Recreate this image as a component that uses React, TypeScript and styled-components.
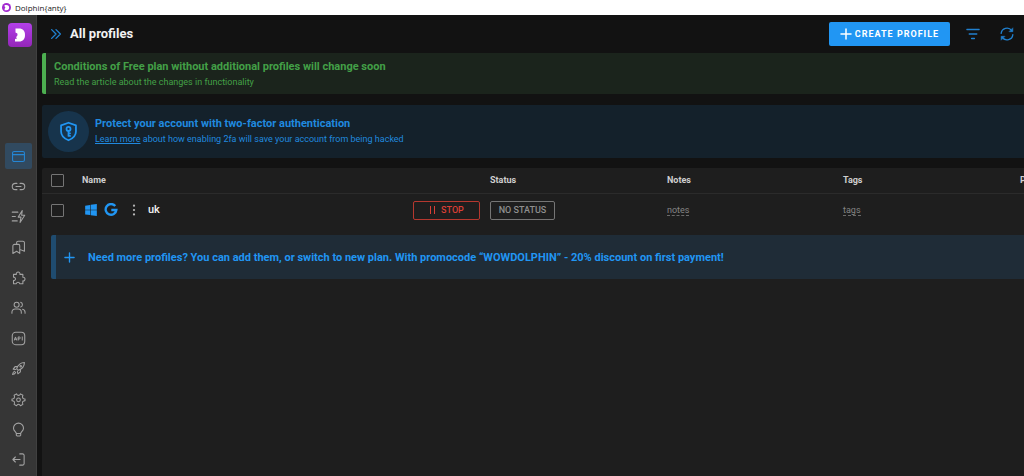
import React from 'react';
import styled, { createGlobalStyle } from 'styled-components';

const GlobalStyle = createGlobalStyle`
  *, *::before, *::after { box-sizing: border-box; }
  body {
    margin: 0;
    background: #121212;
    color: #e6e6e6;
    font-family: Roboto, "Liberation Sans", sans-serif;
    font-size: 9px;
    line-height: 14px;
    overflow-x: hidden;
  }
  button, input { font: inherit; margin: 0; }
`;

const blue = '#2196f3';

const Window = styled.div`
  display: flex;
  flex-direction: column;
  min-height: 100vh;
`;

const TitleBar = styled.header`
  display: flex;
  align-items: center;
  gap: 4px;
  height: 15px;
  padding-left: 2px;
  background: #fff;
  color: #222;
  font-family: "Open Sans", "Noto Sans", sans-serif;
  font-size: 8px;
`;

const Body = styled.div`
  display: flex;
  flex: 1;
`;

const Sidebar = styled.aside`
  display: flex;
  flex-direction: column;
  flex: 0 0 37px;
  padding: 8px 4px 3px 5px;
  background: #363636;
  border-right: 1px solid #404040;
`;

const Logo = styled.a`
  display: flex;
  align-items: center;
  justify-content: center;
  width: 24px;
  height: 24px;
  margin: 0 0 96px 3px;
  border-radius: 4px;
  background: linear-gradient(#b340ea, #9326b8);
`;

const Nav = styled.nav`
  display: flex;
  flex: 1;
  flex-direction: column;
  justify-content: space-between;
`;

const NavButton = styled.button<{ $active?: boolean }>`
  display: flex;
  align-items: center;
  justify-content: center;
  width: 27px;
  height: 26px;
  padding: 0;
  border: 0;
  border-radius: 2px;
  background: ${p => (p.$active ? '#314a60' : 'transparent')};
  color: ${p => (p.$active ? '#2586d4' : '#a3a3a3')};
`;

const Main = styled.main`
  display: flex;
  flex: 1;
  flex-direction: column;
  min-width: 0;
  padding-left: 5px;
`;

const Toolbar = styled.div`
  display: flex;
  align-items: center;
  height: 38px;
  padding: 0 10px 0 7px;
`;

const Title = styled.h1`
  flex: 1;
  margin: 0 0 0 7px;
  color: #f2f2f2;
  font-size: 13px;
  font-weight: 700;
  line-height: 18px;
`;

const IconButton = styled.button`
  display: flex;
  align-items: center;
  justify-content: center;
  width: 14px;
  height: 24px;
  padding: 0;
  border: 0;
  background: none;
  color: #2080cf;
`;

const ToolbarActions = styled.div`
  display: flex;
  align-items: center;
  gap: 20px;
  margin-left: 16px;
`;

const CreateButton = styled.button`
  display: flex;
  align-items: center;
  justify-content: center;
  gap: 3px;
  width: 121px;
  height: 24px;
  padding: 0;
  border: 0;
  border-radius: 2px;
  background: ${blue};
  color: #fff;
  font-size: 9px;
  font-weight: 700;
  letter-spacing: 1px;
`;

const Notice = styled.section`
  height: 41px;
  padding: 6px 8px;
  border-left: 4px solid #4caf50;
  border-radius: 2px 0 0 2px;
  background: #1b241c;
  color: #43a047;
`;

const BannerTitle = styled.h2`
  margin: 0;
  font-size: 11px;
  font-weight: 700;
  line-height: 15px;
`;

const BannerText = styled.p`
  margin: 0;
  font-size: 9px;
  line-height: 16px;
`;

const Security = styled.section`
  display: flex;
  align-items: center;
  gap: 6px;
  height: 53px;
  margin: 11px 0 10px;
  padding: 0 6px;
  border-radius: 2px 0 0 2px;
  background: #14212b;
  color: #2089df;
`;

const ShieldBadge = styled.div`
  display: flex;
  align-items: center;
  justify-content: center;
  width: 41px;
  height: 41px;
  border-radius: 50%;
  background: #17344c;
  color: ${blue};
`;

const Link = styled.a`
  color: inherit;
`;

const Panel = styled.section`
  flex: 1;
  border-radius: 2px 0 0 0;
  background: #1e1e1e;
`;

const Table = styled.table`
  width: 100%;
  border-collapse: collapse;
  table-layout: fixed;
`;

const Col = styled.col<{ $width?: number }>`
  width: ${p => (p.$width ? `${p.$width}px` : 'auto')};
`;

const HeadCell = styled.th`
  height: 25px;
  padding: 0;
  border-bottom: 1px solid #2b2b2b;
  color: #cfcfcf;
  font-size: 9px;
  font-weight: 700;
  text-align: left;
  white-space: nowrap;
`;

const Cell = styled.td`
  height: 34px;
  padding: 0;
`;

const Checkbox = styled.input`
  display: block;
  appearance: none;
  width: 13px;
  height: 13px;
  margin-left: 9px;
  border: 1px solid #757575;
  border-radius: 1px;
`;

const NameContent = styled.div`
  display: flex;
  align-items: center;
  padding: 0 10px 0 2px;
`;

const BrandIcons = styled.span`
  display: flex;
  gap: 6px;
  color: ${blue};
`;

const MenuButton = styled(IconButton)`
  margin: 0 7px 0 9px;
  color: #b8b8b8;
`;

const ProfileName = styled.span`
  flex: 1;
  color: #f0f0f0;
  font-size: 11px;
  font-weight: 500;
`;

const OutlineButton = styled.button<{ $tone: string; $line: string; $width: number }>`
  display: flex;
  align-items: center;
  justify-content: center;
  gap: 5px;
  width: ${p => p.$width}px;
  height: 19px;
  padding: 0;
  border: 1px solid ${p => p.$line};
  border-radius: 2px;
  background: none;
  color: ${p => p.$tone};
  font-size: 9px;
  font-weight: 500;
`;

const InlineEdit = styled.button`
  display: block;
  padding: 0;
  border: 0;
  border-bottom: 1px dashed #6a6a6a;
  background: none;
  color: #858585;
  font-size: 9px;
  line-height: 10px;
`;

const Promo = styled.section`
  display: flex;
  align-items: center;
  gap: 13px;
  height: 44px;
  margin: 8px 0 0 9px;
  padding-left: 8px;
  border-left: 5px solid #1f4c70;
  border-radius: 2px 0 0 2px;
  background: #1f2c37;
  color: ${blue};
`;

type IconProps = { size?: number; stroke?: number; children: React.ReactNode };

const Icon = ({ size = 15, stroke = 1.7, children }: IconProps) => (
  <svg width={size} height={size} viewBox="0 0 24 24" fill="none" stroke="currentColor"
    strokeWidth={stroke} strokeLinecap="round" strokeLinejoin="round" aria-hidden="true">
    {children}
  </svg>
);

const navItems: { label: string; icon: React.ReactNode }[] = [
  { label: 'Profiles', icon: <><rect x="2.5" y="4" width="19" height="16" rx="2.5" /><path d="M2.5 9h19" /></> },
  { label: 'Proxies', icon: <path d="M9.500 7H7a5 5 0 0 0 0 10h2.500M14.500 7H17a5 5 0 0 1 0 10h-2.500M8 12h8" /> },
  { label: 'Automation', icon: <path d="M18 2.5 11.5 13H16l-1.500 8.500L22 10h-5zM2 5h9M4.500 5h.1M2 12h5M2 19h8" /> },
  { label: 'Bookmarks', icon: <path d="M3 9.500A2.500 2.500 0 0 1 5.500 7H12a2 2 0 0 1 2 2v12.500l-5-3.500-6 3.500zM9 7V4.500A2.500 2.500 0 0 1 11.500 2H19a2.500 2.500 0 0 1 2.500 2.500V18L14 15" /> },
  { label: 'Extensions', icon: <path d="M4 7h4.500a3 3 0 1 1 5.800 0H19v4.700a2.900 2.900 0 1 1 0 5.700V22h-5a2.800 2.800 0 0 0-5.500 0H4v-5.200a2.700 2.700 0 1 0 0-5.300z" /> },
  { label: 'Users', icon: <><circle cx="9" cy="7.500" r="4" /><path d="M1.500 21v-1.500a5 5 0 0 1 5-5h5a5 5 0 0 1 5 5V21M15.500 3.700a4 4 0 0 1 0 7.600M18.500 14.700a5 5 0 0 1 4 4.800V21" /></> },
  {
    label: 'API',
    icon: <><rect x="2" y="2" width="20" height="20" rx="5.500" /><path strokeWidth="1.6" d="m5.500 14.500 1.700-5 1.700 5M6 13h2.400M11.500 14.500v-5h1.700a1.600 1.600 0 0 1 0 3.200h-1.700M18 9.500v5" /></>,
  },
  { label: 'Launch', icon: <><path d="M9 12.500C11 7 15 2.500 21.500 2.500c0 6.500-4.500 10.500-10 12.500zM10 9H6.500L3.500 13l4 .5M15 14v3.500l-4 3-.7-4M6 16.500c-2 .5-3 2-3.500 5 3-.3 4.500-1.500 5-3.500" /><circle cx="15.500" cy="8.500" r="1.200" /></> },
  { label: 'Settings', icon: <><path d="M8.800 3 10 4.500a3 3 0 0 0 4 0L15.200 3l3.800 2.200-.6 2a3 3 0 0 0 2 3.500l2 .5v2.600l-2 .5a3 3 0 0 0-2 3.500l.6 2-3.800 2.200-1.200-1.500a3 3 0 0 0-4 0L8.800 22 5 19.800l.6-2a3 3 0 0 0-2-3.500l-2-.5v-2.600l2-.5a3 3 0 0 0 2-3.500L5 5.200z" /><circle cx="12" cy="12.500" r="3" /></> },
  { label: 'Hints', icon: <path d="M8.500 18.500C8.500 16 4 14.500 4 9.800a8 8 0 0 1 16 0c0 4.700-4.500 6.200-4.500 8.700zM8.500 18.500V21l1.500 1.500h4l1.500-1.500v-2.500" /> },
  { label: 'Log out', icon: <path d="M14 3h4.500A2.500 2.500 0 0 1 21 5.500v13a2.500 2.500 0 0 1-2.500 2.500H14M14.500 12H3M7 8l-4 4 4 4" /> },
];

export default function App() {
  return (
    <Window>
      <GlobalStyle />
      <TitleBar>
        <svg width="9" height="9" viewBox="0 0 24 24" aria-hidden="true">
          <circle cx="12" cy="12" r="12" fill="#a32bd0" />
          <path d="M7 5h5a7 7 0 0 1 0 14H7v-4l2-3-2-3z" fill="#fff" />
        </svg>
        <span>Dolphin{'{anty}'}</span>
      </TitleBar>
      <Body>
        <Sidebar>
          <Logo href="#" aria-label="Home">
            <svg width="10" height="14" viewBox="0 0 20 28" aria-hidden="true">
              <path d="M1 1h7c8 0 12 5 12 13S16 27 8 27H0v-5l4-1-2-3c2-1 3-3 3-5s-1-3-4-4z" fill="#fff" />
            </svg>
          </Logo>
          <Nav aria-label="Main">
            {navItems.map((item, i) => (
              <NavButton key={item.label} $active={i === 0} aria-label={item.label}>
                <Icon>{item.icon}</Icon>
              </NavButton>
            ))}
          </Nav>
        </Sidebar>
        <Main>
          <Toolbar>
            <IconButton aria-label="Expand menu">
              <Icon size={14} stroke={2.4}><path d="m4.500 4.500 7.500 7.500-7.500 7.500M12 4.500l7.500 7.500-7.500 7.500" /></Icon>
            </IconButton>
            <Title>All profiles</Title>
            <CreateButton>
              <Icon size={12} stroke={3}><path d="M12 2v20M2 12h20" /></Icon>
              CREATE PROFILE
            </CreateButton>
            <ToolbarActions>
              <IconButton aria-label="Filter">
                <Icon size={14} stroke={2.2}><path d="M1.500 4.300h21M5.500 12h13M9.500 19.700h5" /></Icon>
              </IconButton>
              <IconButton aria-label="Refresh">
                <Icon size={14} stroke={2.2}>
                  <path d="M2 11A10 10 0 0 1 20 6M22 13a10 10 0 0 1-18 5" />
                  <path d="M22 2v6h-6zM2 22v-6h6z" fill="currentColor" strokeWidth="1" />
                </Icon>
              </IconButton>
            </ToolbarActions>
          </Toolbar>

          <Notice>
            <BannerTitle>Conditions of Free plan without additional profiles will change soon</BannerTitle>
            <BannerText>Read the article about the changes in functionality</BannerText>
          </Notice>

          <Security>
            <ShieldBadge>
              <Icon size={21} stroke={2}>
                <path d="M12 2 3.500 5v7c0 5 3.500 8 8.500 10 5-2 8.500-5 8.500-10V5z" />
                <circle cx="12" cy="9" r="2.300" />
                <path d="M12 11.500V17M12 14h1.800M12 17h1.800" />
              </Icon>
            </ShieldBadge>
            <div>
              <BannerTitle>Protect your account with two-factor authentication</BannerTitle>
              <BannerText><Link href="#">Learn more</Link> about how enabling 2fa will save your account from being hacked</BannerText>
            </div>
          </Security>

          <Panel>
            <Table>
              <colgroup>
                <Col $width={40} />
                <Col />
                <Col $width={177} />
                <Col $width={176} />
                <Col $width={177} />
                <Col $width={4} />
              </colgroup>
              <thead>
                <tr>
                  <HeadCell><Checkbox type="checkbox" aria-label="Select all profiles" /></HeadCell>
                  <HeadCell>Name</HeadCell>
                  <HeadCell>Status</HeadCell>
                  <HeadCell>Notes</HeadCell>
                  <HeadCell>Tags</HeadCell>
                  <HeadCell>P</HeadCell>
                </tr>
              </thead>
              <tbody>
                <tr>
                  <Cell><Checkbox type="checkbox" aria-label="Select uk" /></Cell>
                  <Cell>
                    <NameContent>
                      <BrandIcons>
                        <svg width="14" height="14" viewBox="0 0 24 24" fill="currentColor" aria-hidden="true">
                          <path d="M2 4.500 10.500 3.300v8.200H2zM11.500 3.200 22 1.700v9.800H11.500zM2 12.500h8.500v8.200L2 19.500zM11.500 12.500H22v9.800l-10.500-1.500z" />
                        </svg>
                        <svg width="14" height="14" viewBox="0 0 24 24" fill="none" stroke="currentColor" strokeWidth="4" aria-hidden="true">
                          <path d="M19.300 5.300A9.200 9.200 0 1 0 21.200 12H12.500" />
                        </svg>
                      </BrandIcons>
                      <MenuButton aria-label="Profile menu">
                        <svg width="14" height="14" viewBox="0 0 24 24" fill="currentColor" aria-hidden="true">
                          <circle cx="12" cy="4.500" r="1.900" /><circle cx="12" cy="12" r="1.900" /><circle cx="12" cy="19.500" r="1.900" />
                        </svg>
                      </MenuButton>
                      <ProfileName>uk</ProfileName>
                      <OutlineButton $tone="#d93f35" $line="#b5382f" $width={67}>
                        <svg width="7" height="8" viewBox="0 0 7 8" stroke="currentColor" aria-hidden="true">
                          <path d="M1.500 0v8M5.500 0v8" />
                        </svg>
                        STOP
                      </OutlineButton>
                    </NameContent>
                  </Cell>
                  <Cell>
                    <OutlineButton $tone="#8f8f8f" $line="#757575" $width={65}>NO STATUS</OutlineButton>
                  </Cell>
                  <Cell><InlineEdit>notes</InlineEdit></Cell>
                  <Cell><InlineEdit>tags</InlineEdit></Cell>
                  <Cell />
                </tr>
              </tbody>
            </Table>
            <Promo>
              <Icon size={11} stroke={3}><path d="M12 2v20M2 12h20" /></Icon>
              <BannerTitle as="p">Need more profiles? You can add them, or switch to new plan. With promocode “WOWDOLPHIN” - 20% discount on first payment!</BannerTitle>
            </Promo>
          </Panel>
        </Main>
      </Body>
    </Window>
  );
}
